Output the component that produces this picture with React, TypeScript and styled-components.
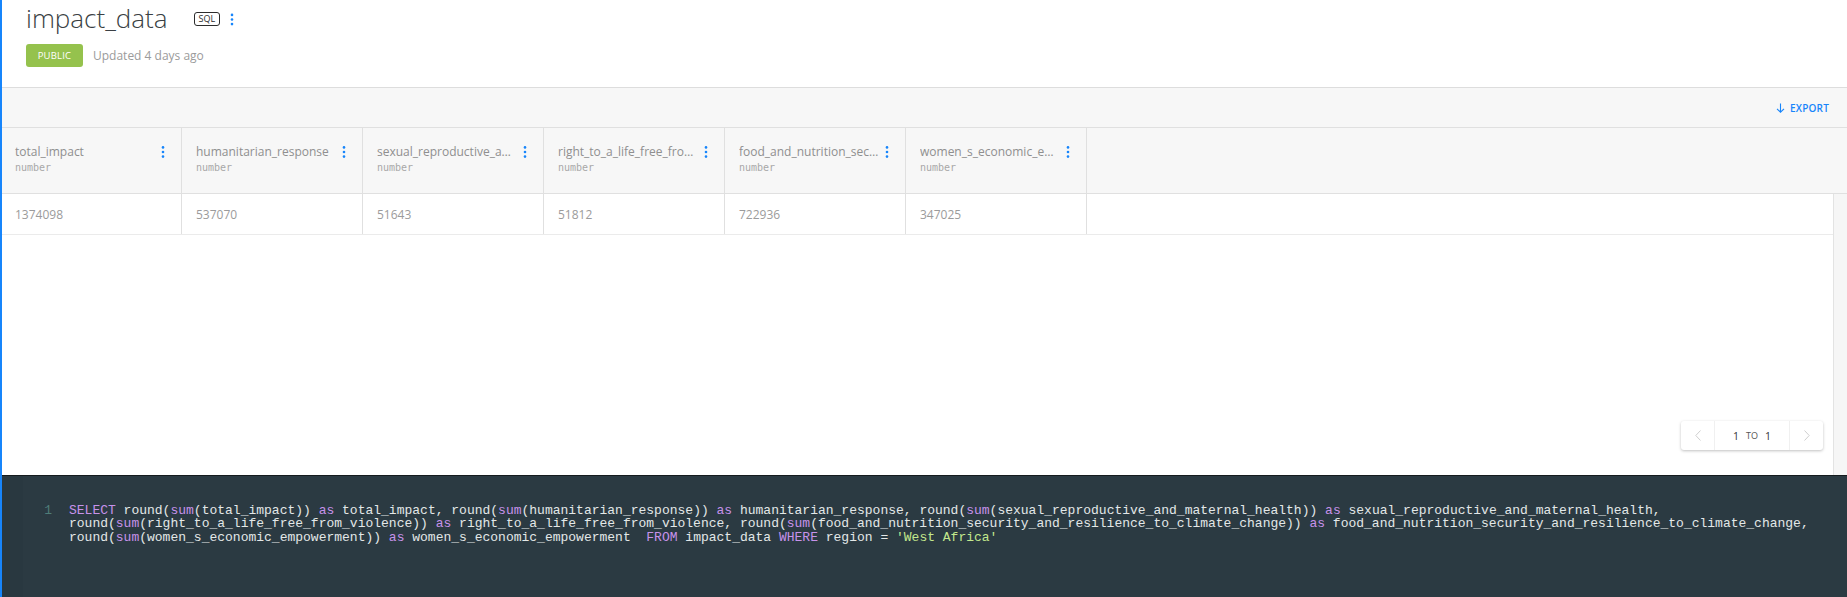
import React from "react";
import styled, { createGlobalStyle } from "styled-components";

const GlobalStyle = createGlobalStyle`
  html, body, #root {
    margin: 0;
    padding: 0;
    height: 100%;
  }
  body {
    font-family: "Open Sans", "Liberation Sans", sans-serif;
    background: #fff;
  }
`;

const Page = styled.div`
  height: 100vh;
  display: flex;
  flex-direction: column;
  border-left: 2px solid #1785fb;
  box-sizing: border-box;
  overflow: hidden;
`;

const Header = styled.header`
  padding: 0 0 20px 24px;
  border-bottom: 1px solid #dddddd;
`;

const TitleRow = styled.div`
  display: flex;
  align-items: center;
  height: 36px;
`;

const Title = styled.h1`
  margin: 0;
  font-size: 26px;
  line-height: 36px;
  font-weight: 300;
  color: #3a3f44;
`;

const SqlTag = styled.span`
  margin-left: 26px;
  margin-top: 2px;
  height: 14px;
  padding: 0 4px;
  border: 1px solid #2c2c2c;
  border-radius: 3px;
  box-sizing: border-box;
  font-size: 9px;
  line-height: 12px;
  color: #2c2c2c;
`;

const Meta = styled.div`
  display: flex;
  align-items: center;
  gap: 10px;
  margin-top: 8px;
`;

const PublicBadge = styled.span`
  display: inline-flex;
  align-items: center;
  justify-content: center;
  width: 57px;
  height: 23px;
  border-radius: 3px;
  background: #95c24d;
  color: #fff;
  font-size: 9.5px;
  letter-spacing: 0.2px;
`;

const Updated = styled.span`
  font-size: 12px;
  color: #9b9b9b;
`;

const Toolbar = styled.div`
  height: 40px;
  display: flex;
  justify-content: flex-end;
  align-items: center;
  padding-right: 18px;
  background: #f7f7f7;
  border-bottom: 1px solid #e0e0e0;
  box-sizing: border-box;
  flex-shrink: 0;
`;

const ExportButton = styled.button`
  display: flex;
  align-items: center;
  gap: 5px;
  border: none;
  background: none;
  padding: 0;
  color: #1785fb;
  font-family: inherit;
  font-size: 10px;
  font-weight: 600;
  letter-spacing: 0.2px;
`;

const HeadRow = styled.div`
  display: flex;
  height: 66px;
  background: #f7f7f7;
  border-bottom: 1px solid #e0e0e0;
  box-sizing: border-box;
  flex-shrink: 0;
`;

const HeadCell = styled.div`
  width: 181px;
  flex-shrink: 0;
  box-sizing: border-box;
  border-right: 1px solid #e0e0e0;
  padding: 16px 16px 0 14px;
  display: flex;
  gap: 6px;

  &:first-child {
    width: 180px;
    padding-left: 13px;
  }
`;

const HeadText = styled.div`
  flex: 1;
  min-width: 0;
`;

const ColName = styled.div`
  font-size: 12px;
  line-height: 16px;
  color: #8f8f8f;
  white-space: nowrap;
  overflow: hidden;
  text-overflow: ellipsis;
`;

const ColType = styled.div`
  font-family: "DejaVu Sans Mono", "Liberation Mono", monospace;
  font-size: 10px;
  line-height: 15px;
  color: #a8a8a8;
`;

const Kebab = styled.span<{ $top: number }>`
  display: flex;
  width: 4px;
  margin-top: ${(p) => p.$top}px;
  align-self: flex-start;
`;

const Body = styled.div`
  flex: 1;
  display: flex;
  min-height: 0;
`;

const Rows = styled.div`
  flex: 1;
  position: relative;
`;

const Row = styled.div`
  display: flex;
  height: 41px;
  border-bottom: 1px solid #ebebeb;
  box-sizing: border-box;
`;

const Cell = styled.div`
  width: 181px;
  flex-shrink: 0;
  box-sizing: border-box;
  border-right: 1px solid #e0e0e0;
  padding-left: 14px;
  display: flex;
  align-items: center;
  font-size: 12px;
  color: #9b9b9b;

  &:first-child {
    width: 180px;
    padding-left: 13px;
  }
`;

const ScrollTrack = styled.div`
  width: 13px;
  background: #f6f6f6;
  border-left: 1px solid #e3e3e3;
`;

const Pager = styled.div`
  position: absolute;
  right: 10px;
  bottom: 25px;
  width: 142px;
  height: 29px;
  display: flex;
  background: #fff;
  border-radius: 3px;
  box-shadow: 0 1px 3px rgba(0, 0, 0, 0.25);
`;

const PagerArrow = styled.div<{ $side: "left" | "right" }>`
  width: 33px;
  display: flex;
  align-items: center;
  justify-content: center;
  border-${(p) => (p.$side === "left" ? "right" : "left")}: 1px solid #f0f0f0;
`;

const PagerLabel = styled.div`
  flex: 1;
  display: flex;
  align-items: center;
  justify-content: center;
  gap: 7px;
  font-size: 10.5px;
  color: #333;
`;

const PagerTo = styled.span`
  font-size: 9px;
  color: #555;
`;

const Editor = styled.div`
  height: 122px;
  flex-shrink: 0;
  display: flex;
  background: #2b3a42;
  border-top: 1px solid #151b1e;
  box-sizing: border-box;
`;

const Gutter = styled.div`
  width: 21px;
  background: #293840;
`;

const LineNo = styled.div`
  width: 29px;
  padding-top: 28px;
  text-align: right;
  font-family: "Liberation Mono", "Courier New", monospace;
  font-size: 13px;
  line-height: 13.4px;
  color: #4f7d78;
`;

const Code = styled.pre`
  margin: 0 0 0 17px;
  padding-top: 28px;
  font-family: "Liberation Mono", "Courier New", monospace;
  font-size: 13px;
  line-height: 13.4px;
  color: #e3e8e8;
  white-space: pre;
`;

const Token = styled.span<{ $kind: "kw" | "str" | "plain" }>`
  color: ${(p) => (p.$kind === "kw" ? "#c792ea" : p.$kind === "str" ? "#c3e88d" : "inherit")};
`;

const columns = [
  { name: "total_impact", value: "1374098" },
  { name: "humanitarian_response", value: "537070" },
  { name: "sexual_reproductive_and_maternal_health", value: "51643" },
  { name: "right_to_a_life_free_from_violence", value: "51812" },
  { name: "food_and_nutrition_security_and_resilience_to_climate_change", value: "722936" },
  { name: "women_s_economic_empowerment", value: "347025" },
];

const sqlLines = [
  "SELECT round(sum(total_impact)) as total_impact, round(sum(humanitarian_response)) as humanitarian_response, round(sum(sexual_reproductive_and_maternal_health)) as sexual_reproductive_and_maternal_health,",
  "round(sum(right_to_a_life_free_from_violence)) as right_to_a_life_free_from_violence, round(sum(food_and_nutrition_security_and_resilience_to_climate_change)) as food_and_nutrition_security_and_resilience_to_climate_change,",
  "round(sum(women_s_economic_empowerment)) as women_s_economic_empowerment  FROM impact_data WHERE region = 'West Africa'",
];

function highlight(line: string) {
  return line.split(/(\bSELECT\b|\bas\b|\bFROM\b|\bWHERE\b|\bsum\b|'[^']*')/).map((part, i) => {
    const kind = part.startsWith("'") ? "str" : /^(SELECT|as|FROM|WHERE|sum)$/.test(part) ? "kw" : "plain";
    return (
      <Token key={i} $kind={kind}>
        {part}
      </Token>
    );
  });
}

const Dots = ({ height = 12 }: { height?: number }) => (
  <svg width="4" height={height} viewBox="0 0 4 12">
    <circle cx="2" cy="1.4" r="1.3" fill="#1785fb" />
    <circle cx="2" cy="6" r="1.3" fill="#1785fb" />
    <circle cx="2" cy="10.6" r="1.3" fill="#1785fb" />
  </svg>
);

export default function App() {
  return (
    <>
      <GlobalStyle />
      <Page>
        <Header>
          <TitleRow>
            <Title>impact_data</Title>
            <SqlTag>SQL</SqlTag>
            <span style={{ marginLeft: 10, marginTop: 2, display: "flex" }}>
              <Dots height={13} />
            </span>
          </TitleRow>
          <Meta>
            <PublicBadge>PUBLIC</PublicBadge>
            <Updated>Updated 4 days ago</Updated>
          </Meta>
        </Header>

        <Toolbar>
          <ExportButton>
            <svg width="9" height="10" viewBox="0 0 9 10">
              <path d="M4.5 0.5V9.2M1 5.8L4.5 9.2L8 5.8" stroke="#1785fb" strokeWidth="1.1" fill="none" />
            </svg>
            EXPORT
          </ExportButton>
        </Toolbar>

        <HeadRow>
          {columns.map((c) => (
            <HeadCell key={c.name}>
              <HeadText>
                <ColName>{c.name}</ColName>
                <ColType>number</ColType>
              </HeadText>
              <Kebab $top={2}>
                <Dots />
              </Kebab>
            </HeadCell>
          ))}
        </HeadRow>

        <Body>
          <Rows>
            <Row>
              {columns.map((c) => (
                <Cell key={c.name}>{c.value}</Cell>
              ))}
            </Row>
            <Pager>
              <PagerArrow $side="left">
                <svg width="6" height="11" viewBox="0 0 6 11">
                  <path d="M5.5 0.5L0.8 5.5L5.5 10.5" stroke="#cfcfcf" strokeWidth="1" fill="none" />
                </svg>
              </PagerArrow>
              <PagerLabel>
                <span>1</span>
                <PagerTo>TO</PagerTo>
                <span>1</span>
              </PagerLabel>
              <PagerArrow $side="right">
                <svg width="6" height="11" viewBox="0 0 6 11">
                  <path d="M0.5 0.5L5.2 5.5L0.5 10.5" stroke="#cfcfcf" strokeWidth="1" fill="none" />
                </svg>
              </PagerArrow>
            </Pager>
          </Rows>
          <ScrollTrack />
        </Body>

        <Editor>
          <Gutter />
          <LineNo>1</LineNo>
          <Code>
            {sqlLines.map((l, i) => (
              <div key={i}>{highlight(l)}</div>
            ))}
          </Code>
        </Editor>
      </Page>
    </>
  );
}
